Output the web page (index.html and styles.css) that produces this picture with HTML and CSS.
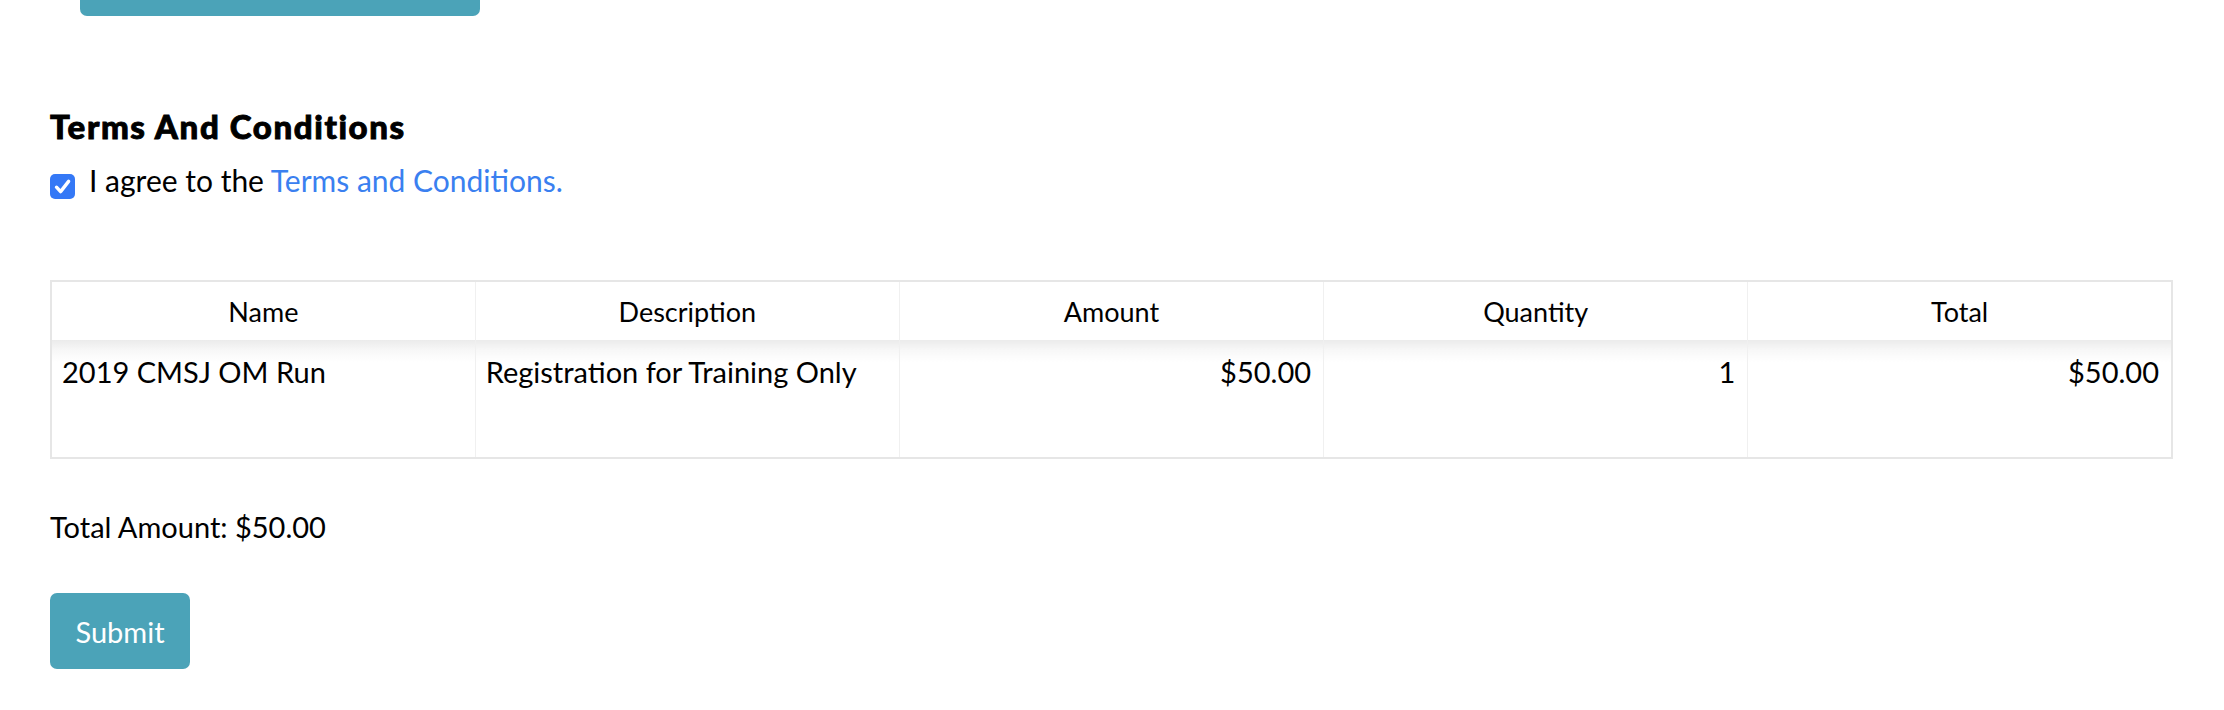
FILE: index.html
```html
<!DOCTYPE html>
<html lang="en">
<head>
<meta charset="utf-8">
<title>Terms and Payment</title>
<link rel="stylesheet" href="styles.css">
</head>
<body>
<div class="page">
  <div class="top-btn"></div>

  <h2 class="terms-title">Terms And Conditions</h2>
  <div class="agree-row">
    <span class="checkbox">
      <svg viewBox="0 0 25 25" width="25" height="25"><path d="M6.5 13.2 L10.6 17.6 L18.6 7.4" fill="none" stroke="#fff" stroke-width="3.4" stroke-linecap="round" stroke-linejoin="round"/></svg>
    </span>
    <span class="agree-text">I agree to the <a class="terms-link" href="#">Terms and Conditions.</a></span>
  </div>

  <table class="items">
    <thead>
      <tr>
        <th>Name</th>
        <th>Description</th>
        <th>Amount</th>
        <th>Quantity</th>
        <th>Total</th>
      </tr>
    </thead>
    <tbody>
      <tr>
        <td>2019 CMSJ OM Run</td>
        <td>Registration for Training Only</td>
        <td class="num">$50.00</td>
        <td class="num">1</td>
        <td class="num">$50.00</td>
      </tr>
    </tbody>
  </table>

  <p class="total-amount">Total Amount: $50.00</p>

  <button class="submit-btn" type="button">Submit</button>
</div>
</body>
</html>
```

FILE: styles.css
```css
html, body {
  margin: 0;
  padding: 0;
  background: #ffffff;
}

body {
  font-family: "Lato", "Open Sans", "Liberation Sans", sans-serif;
  color: #000;
}

.page {
  padding: 0 51px 0 50px;
}

.top-btn {
  width: 400px;
  height: 16px;
  margin-left: 30px;
  background: #4ba3b8;
  border-radius: 0 0 7px 7px;
}

.terms-title {
  margin: 90px 0 0 0;
  font-size: 33px;
  line-height: 40px;
  font-weight: 900;
  letter-spacing: 1.6px;
  -webkit-text-stroke: 0.9px #000;
}

.agree-row {
  display: flex;
  align-items: flex-start;
  margin-top: 14px;
  height: 40px;
}

.checkbox {
  display: block;
  width: 25px;
  height: 25px;
  margin-top: 14px;
  margin-right: 14px;
  border-radius: 5px;
  background: #3478f6;
}

.checkbox svg {
  display: block;
}

.agree-text {
  font-size: 30px;
  line-height: 40px;
}

.terms-link {
  color: #3a80f0;
  text-decoration: none;
}

.items {
  width: 100%;
  margin-top: 80px;
  border-collapse: collapse;
  table-layout: fixed;
  border: 2px solid #e6e6e6;
}

.items th {
  height: 58px;
  padding: 0 12px;
  font-size: 27px;
  font-weight: 400;
  text-align: center;
  vertical-align: middle;
  border-left: 1px solid #f0f0f0;
  background: #fff;
}

.items td {
  height: 118px;
  padding: 12px 12px 0 10px;
  box-sizing: border-box;
  font-size: 29px;
  line-height: 40px;
  vertical-align: top;
  text-align: left;
  border-left: 1px solid #f0f0f0;
  background: linear-gradient(to bottom, #ebebeb 0px, #f7f7f7 10px, #ffffff 22px);
}

.items th:first-child,
.items td:first-child {
  border-left: none;
}

.items td.num {
  text-align: right;
}

.total-amount {
  margin: 48px 0 0 0;
  font-size: 29px;
  line-height: 40px;
}

.submit-btn {
  display: block;
  margin-top: 46px;
  width: 140px;
  height: 76px;
  padding: 0;
  border: none;
  border-radius: 7px;
  background: #4ba3b8;
  color: #fff;
  font-family: "Lato", "Open Sans", "Liberation Sans", sans-serif;
  font-size: 29px;
  font-weight: 400;
  cursor: pointer;
}
```
